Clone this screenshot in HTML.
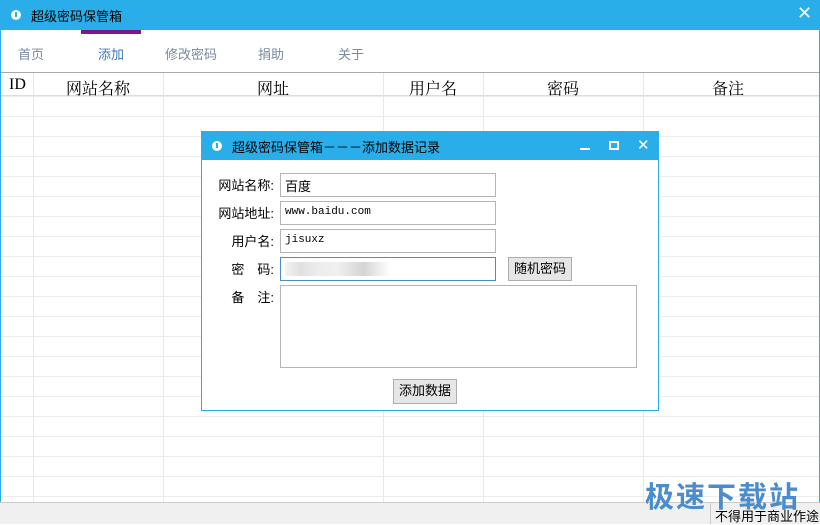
<!DOCTYPE html>
<html><head><meta charset="utf-8"><style>
*{margin:0;padding:0;box-sizing:border-box}
body{width:820px;height:524px;position:relative;overflow:hidden;background:#fff;font-family:"Liberation Sans","Noto Sans CJK SC",sans-serif;font-size:13px;color:#000}
.abs{position:absolute}
.tb{left:0;top:0;width:820px;height:30px;background:#2aaeea}
.ico{width:10px;height:10px;border-radius:50%;background:#fff}
.ico:after{content:"";position:absolute;left:4px;top:2px;width:2px;height:5px;background:#2aaeea}
.nav{top:44px;font-size:13px;color:#7a8aa0}
.grid{left:1px;top:72px;width:818px;height:430px;border-top:1px solid #aaa;
background:repeating-linear-gradient(to bottom,transparent 0,transparent 19px,#ececec 19px,#ececec 20px);background-position:0 4px}
.hdr{left:1px;top:73px;width:818px;height:23px;background:#fff;border-bottom:1px solid #ddd}
.vl{top:73px;width:1px;height:429px;background:#e8e8e8}
.h{top:76px;font-size:16px;font-family:"Liberation Serif","Noto Serif CJK SC",serif}
.lbl{font-size:13px;text-align:right;width:70px;left:204px}
.inp{left:280px;width:216px;height:24px;border:1px solid #b5b5b5;background:#fff;font-size:12px;padding:3px 4px}
.btn{border:1px solid #adadad;background:#e6e6e6;font-size:13px;text-align:center;line-height:22px}
</style></head><body>
<div class="abs" style="left:0;top:30px;width:1px;height:494px;background:#2aaeea"></div>
<div class="abs" style="right:0;top:30px;width:1px;height:494px;background:#2aaeea"></div>
<div class="abs tb"></div>
<div class="abs ico" style="left:11px;top:10px"></div>
<div class="abs" style="left:31px;top:6px;color:#000;font-size:13px">超级密码保管箱</div>
<div class="abs" style="left:797px;top:3px;color:#fff;font-size:18px">✕</div>
<div class="abs" style="left:81px;top:30px;width:60px;height:4px;background:#7a1a8a"></div>
<div class="abs nav" style="left:18px">首页</div>
<div class="abs nav" style="left:98px;color:#3a7ac0">添加</div>
<div class="abs nav" style="left:165px">修改密码</div>
<div class="abs nav" style="left:258px">捐助</div>
<div class="abs nav" style="left:338px">关于</div>
<div class="abs grid"></div>
<div class="abs hdr"></div>
<div class="abs vl" style="left:33px"></div><div class="abs vl" style="left:163px"></div><div class="abs vl" style="left:383px"></div><div class="abs vl" style="left:483px"></div><div class="abs vl" style="left:643px"></div>
<div class="abs h" style="left:9px">ID</div>
<div class="abs h" style="left:66px">网站名称</div>
<div class="abs h" style="left:257px">网址</div>
<div class="abs h" style="left:409px">用户名</div>
<div class="abs h" style="left:547px">密码</div>
<div class="abs h" style="left:712px">备注</div>
<div class="abs" style="left:0;top:502px;width:820px;height:22px;background:#f0f0f0;border-top:1px solid #ccc"></div>
<div class="abs" style="left:710px;top:503px;width:110px;height:21px;border-left:1px solid #ccc;font-size:13px;padding:3px 0 0 4px">不得用于商业作途</div>
<div class="abs" style="left:645px;top:474px;font-size:29px;font-weight:bold;color:#4a8ccc;letter-spacing:2px">极速下载站</div>
<!-- dialog -->
<div class="abs" style="left:201px;top:131px;width:458px;height:280px;background:#fff;border:1px solid #2aaeea"></div>
<div class="abs" style="left:201px;top:131px;width:458px;height:29px;background:#2aaeea"></div>
<div class="abs ico" style="left:212px;top:141px"></div>
<div class="abs" style="left:232px;top:137px;font-size:13px">超级密码保管箱－－－添加数据记录</div>
<div class="abs" style="left:580px;top:148px;width:10px;height:2px;background:#fff"></div>
<div class="abs" style="left:609px;top:141px;width:10px;height:9px;border:2px solid #fff"></div>
<div class="abs" style="left:637px;top:136px;color:#fff;font-size:15px">✕</div>
<div class="abs lbl" style="top:175px">网站名称:</div>
<div class="abs lbl" style="top:203px">网站地址:</div>
<div class="abs lbl" style="top:231px">用户名:</div>
<div class="abs lbl" style="top:259px">密　码:</div>
<div class="abs lbl" style="top:287px">备　注:</div>
<div class="abs inp" style="top:173px;font-size:13px;padding-top:2px">百度</div>
<div class="abs inp" style="top:201px;font-family:'Liberation Mono',monospace;font-size:11px;padding-top:4px">www.baidu.com</div>
<div class="abs inp" style="top:229px;font-family:'Liberation Mono',monospace;font-size:11px;padding-top:4px">jisuxz</div>
<div class="abs inp" style="top:257px;border-color:#4a90c8"><div style="width:105px;height:14px;margin-top:1px;background:linear-gradient(90deg,#f2f2f2 0,#e0e0e0 15%,#ececec 30%,#f0f0f0 50%,#d4d4d4 75%,#eee 90%,#fff 100%)"></div></div>
<div class="abs btn" style="left:508px;top:257px;width:64px;height:24px">随机密码</div>
<div class="abs" style="left:280px;top:285px;width:357px;height:83px;border:1px solid #b5b5b5"></div>
<div class="abs btn" style="left:393px;top:379px;width:64px;height:25px">添加数据</div>
</body></html>
